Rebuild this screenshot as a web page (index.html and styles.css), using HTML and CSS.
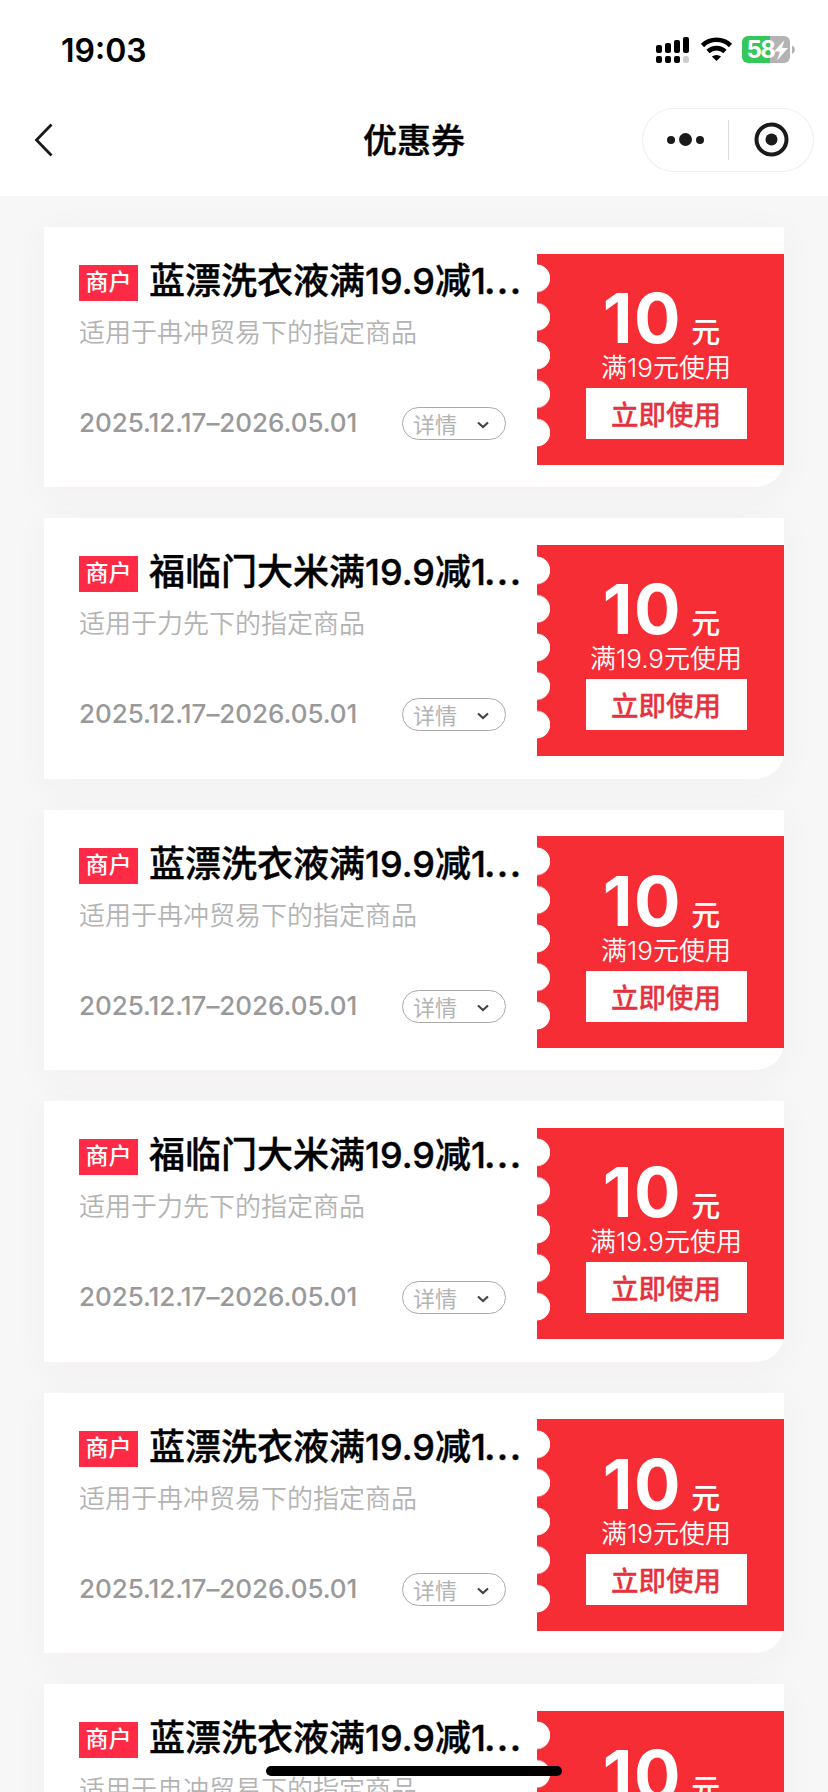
FILE: index.html
```html
<!DOCTYPE html>
<html lang="zh-CN">
<head>
<meta charset="utf-8">
<title>优惠券</title>
<link rel="stylesheet" href="styles.css">
</head>
<body>
<div class="screen">
  <header class="header">
    <div class="status">
      <span class="time">19:03</span>
      <svg class="status-icons" width="144" height="32" viewBox="0 0 144 32">
        <g fill="#000">
          <rect x="2" y="11" width="6" height="8" rx="2"/><rect x="11" y="9" width="6" height="10" rx="2"/><rect x="20" y="6" width="6" height="13" rx="2"/><rect x="29" y="3" width="6" height="16" rx="2"/>
          <rect x="2" y="22" width="6" height="7" rx="2"/><rect x="11" y="22" width="6" height="7" rx="2"/><rect x="20" y="22" width="6" height="7" rx="2"/>
        </g>
        <rect x="29" y="22" width="6" height="7" rx="2.5" fill="#ccc"/>
        <g fill="none" stroke="#000" stroke-width="4.6">
          <path d="M48.5 11.5a20 20 0 0 1 28 0"/>
          <path d="M54 17.5a12.3 12.3 0 0 1 17 0"/>
        </g>
        <path d="M62.500 27l-4.600-4.400a7 7 0 0 1 9.200 0z"/>
        <path d="M94 2h22v27H94a6 6 0 0 1-6-6V8a6 6 0 0 1 6-6z" fill="#34c759"/>
        <path d="M116 2h14a6 6 0 0 1 6 6v15a6 6 0 0 1-6 6h-14z" fill="#b3b3b3"/>
        <path d="M138 11.500q3 1.500 3 4.200t-3 4.200z" fill="#b3b3b3"/>
        <text x="92.500" y="24" class="battery">58</text>
        <path d="M130.500 6l-10.500 11.500h6l-3 9 11-12.500h-6z" fill="#fff"/>
      </svg>
    </div>
    <div class="nav">
      <svg class="back" width="22" height="36" viewBox="0 0 22 36"><path d="M18.500 2.500L3.500 18l15 15.500" fill="none" stroke="#1a1a1a" stroke-width="2.800"/></svg>
      <h1 class="title">优惠券</h1>
      <div class="capsule">
        <svg width="172" height="64" viewBox="0 0 172 64" fill="#1a1a1a">
          <circle cx="29" cy="32" r="4"/><circle cx="43.500" cy="31.500" r="6.500"/><circle cx="58" cy="32" r="4"/>
          <rect x="86" y="12" width="1" height="40" fill="#ddd"/>
          <circle cx="129.500" cy="31.500" r="15" fill="none" stroke="#1a1a1a" stroke-width="4"/><circle cx="129.500" cy="31.500" r="6"/>
        </svg>
      </div>
    </div>
  </header>

  <main class="list">
    <article class="card">
      <div class="info">
        <div class="head"><span class="badge">商户</span><span class="name">蓝漂洗衣液满19.9减1<span class="dots">...</span></span></div>
        <p class="scope">适用于冉冲贸易下的指定商品</p>
        <div class="foot"><span class="date">2025.12.17–2026.05.01</span><span class="detail">详情<svg width="12" height="8" viewBox="0 0 12 8"><path d="M1 1.500l5 4.500 5-4.500" fill="none" stroke="#444" stroke-width="2.200"/></svg></span></div>
      </div>
      <div class="ticket">
        <div class="amount"><span class="value">10</span><span class="unit">元</span></div>
        <p class="rule">满19元使用</p>
        <div class="use">立即使用</div>
      </div>
    </article>
    <article class="card">
      <div class="info">
        <div class="head"><span class="badge">商户</span><span class="name">福临门大米满19.9减1<span class="dots">...</span></span></div>
        <p class="scope">适用于力先下的指定商品</p>
        <div class="foot"><span class="date">2025.12.17–2026.05.01</span><span class="detail">详情<svg width="12" height="8" viewBox="0 0 12 8"><path d="M1 1.500l5 4.500 5-4.500" fill="none" stroke="#444" stroke-width="2.200"/></svg></span></div>
      </div>
      <div class="ticket">
        <div class="amount"><span class="value">10</span><span class="unit">元</span></div>
        <p class="rule">满19.9元使用</p>
        <div class="use">立即使用</div>
      </div>
    </article>
    <article class="card">
      <div class="info">
        <div class="head"><span class="badge">商户</span><span class="name">蓝漂洗衣液满19.9减1<span class="dots">...</span></span></div>
        <p class="scope">适用于冉冲贸易下的指定商品</p>
        <div class="foot"><span class="date">2025.12.17–2026.05.01</span><span class="detail">详情<svg width="12" height="8" viewBox="0 0 12 8"><path d="M1 1.500l5 4.500 5-4.500" fill="none" stroke="#444" stroke-width="2.200"/></svg></span></div>
      </div>
      <div class="ticket">
        <div class="amount"><span class="value">10</span><span class="unit">元</span></div>
        <p class="rule">满19元使用</p>
        <div class="use">立即使用</div>
      </div>
    </article>
    <article class="card">
      <div class="info">
        <div class="head"><span class="badge">商户</span><span class="name">福临门大米满19.9减1<span class="dots">...</span></span></div>
        <p class="scope">适用于力先下的指定商品</p>
        <div class="foot"><span class="date">2025.12.17–2026.05.01</span><span class="detail">详情<svg width="12" height="8" viewBox="0 0 12 8"><path d="M1 1.500l5 4.500 5-4.500" fill="none" stroke="#444" stroke-width="2.200"/></svg></span></div>
      </div>
      <div class="ticket">
        <div class="amount"><span class="value">10</span><span class="unit">元</span></div>
        <p class="rule">满19.9元使用</p>
        <div class="use">立即使用</div>
      </div>
    </article>
    <article class="card">
      <div class="info">
        <div class="head"><span class="badge">商户</span><span class="name">蓝漂洗衣液满19.9减1<span class="dots">...</span></span></div>
        <p class="scope">适用于冉冲贸易下的指定商品</p>
        <div class="foot"><span class="date">2025.12.17–2026.05.01</span><span class="detail">详情<svg width="12" height="8" viewBox="0 0 12 8"><path d="M1 1.500l5 4.500 5-4.500" fill="none" stroke="#444" stroke-width="2.200"/></svg></span></div>
      </div>
      <div class="ticket">
        <div class="amount"><span class="value">10</span><span class="unit">元</span></div>
        <p class="rule">满19元使用</p>
        <div class="use">立即使用</div>
      </div>
    </article>
    <article class="card">
      <div class="info">
        <div class="head"><span class="badge">商户</span><span class="name">蓝漂洗衣液满19.9减1<span class="dots">...</span></span></div>
        <p class="scope">适用于冉冲贸易下的指定商品</p>
      </div>
      <div class="ticket">
        <div class="amount"><span class="value">10</span><span class="unit">元</span></div>
      </div>
    </article>
  </main>
  <div class="home-bar"></div>
</div>
</body>
</html>
```

FILE: styles.css
```css
* { box-sizing: border-box; }

body {
  margin: 0;
  font-family: Inter, "Noto Sans CJK SC", sans-serif;
  background: #f7f7f7;
}

.screen {
  position: relative;
  width: 828px;
  height: 1792px;
  overflow: hidden;
}

.header {
  height: 196px;
  background: #fff;
}

.status {
  display: flex;
  justify-content: space-between;
  padding: 34px 30px 0 61px;
  height: 108px;
}

.time {
  font-size: 32px;
  font-weight: 600;
  line-height: 34px;
}

.battery {
  font-size: 24px;
  font-weight: 700;
  letter-spacing: -1.500px;
  fill: #fff;
}

.nav {
  display: grid;
  grid-template-columns: 1fr auto 1fr;
  align-items: center;
  padding: 0 14px 0 33px;
  height: 64px;
}

.title {
  margin: 2px 0 0 -19px;
  font-size: 34px;
  font-weight: 500;
  line-height: 62px;
  -webkit-text-stroke: .4px #000;
}

.capsule {
  justify-self: end;
  width: 172px;
  height: 64px;
  border-radius: 32px;
  box-shadow: inset 0 0 0 1px #ededed;
}

.list {
  display: flex;
  flex-direction: column;
  gap: 31px;
  padding: 31px 44px 0;
}

.card {
  display: flex;
  flex-shrink: 0;
  height: 260.400px;
  background: #fff;
  border-radius: 0 0 28px 0;
  box-shadow: 0 6px 36px rgba(130, 10, 20, .04);
}

.info {
  width: 493px;
  padding: 30px 31px 0 35px;
}

.head {
  display: flex;
  align-items: center;
  height: 48px;
  white-space: nowrap;
}

.badge {
  flex-shrink: 0;
  width: 59px;
  height: 36px;
  margin: 4px 11px 0 0;
  background: #ff2a46;
  color: #fff;
  font-size: 23px;
  font-weight: 500;
  line-height: 35px;
  text-align: center;
}

.name {
  font-size: 36px;
  font-weight: 500;
  line-height: 48px;
  -webkit-text-stroke: .4px #000;
}

.dots {
  margin-left: -2px;
  font-weight: 600;
  letter-spacing: 1.500px;
}

.scope {
  margin: 8px 0 0;
  color: #b3b3b3;
  font-size: 26px;
  font-weight: 350;
  line-height: 40px;
}

.foot {
  display: flex;
  align-items: center;
  justify-content: space-between;
  height: 33px;
  margin-top: 54px;
}

.date {
  margin-bottom: 1px;
  color: #999;
  font-size: 26px;
  font-weight: 500;
  line-height: 32px;
  letter-spacing: -.050px;
  white-space: nowrap;
}

.detail {
  display: flex;
  align-items: center;
  justify-content: space-between;
  width: 104px;
  height: 33px;
  padding: 3px 16px 0 10px;
  border: 1px solid #aaa;
  border-radius: 17px;
  color: #b3b3b3;
  font-size: 22px;
  line-height: 30px;
}

.ticket {
  position: relative;
  display: flex;
  flex-direction: column;
  align-items: center;
  width: 247px;
  height: 211.500px;
  margin-top: 26.600px;
  padding-left: 11px;
  background: #f72d36;
  color: #fff;
}

/* perforated left edge */
.ticket::before {
  content: "";
  position: absolute;
  left: 0;
  top: 5.600px;
  width: 14px;
  height: 193px;
  background: radial-gradient(circle at -.700px 19.300px, #fff 13.500px, transparent 14.200px) 0 0 / 14px 38.600px repeat-y;
}

.amount {
  display: flex;
  align-items: baseline;
  height: 94.500px;
  padding: 30.500px 9px 0 0;
}

.value {
  font-size: 69px;
  font-weight: 700;
  line-height: 69px;
  letter-spacing: 1.500px;
}

.unit {
  margin-left: 9px;
  font-size: 29px;
  font-weight: 500;
  line-height: 30px;
}

.rule {
  margin: 0;
  font-size: 26px;
  font-weight: 350;
  line-height: 40px;
}

.use {
  width: 161px;
  height: 51px;
  background: #fff;
  color: #e5323c;
  font-size: 27.500px;
  font-weight: 500;
  line-height: 54px;
  text-align: center;
  -webkit-text-stroke: .3px #e5323c;
}

.home-bar {
  position: absolute;
  left: 266px;
  top: 1766px;
  width: 296px;
  height: 10px;
  border-radius: 5px;
  background: #000;
}
```
